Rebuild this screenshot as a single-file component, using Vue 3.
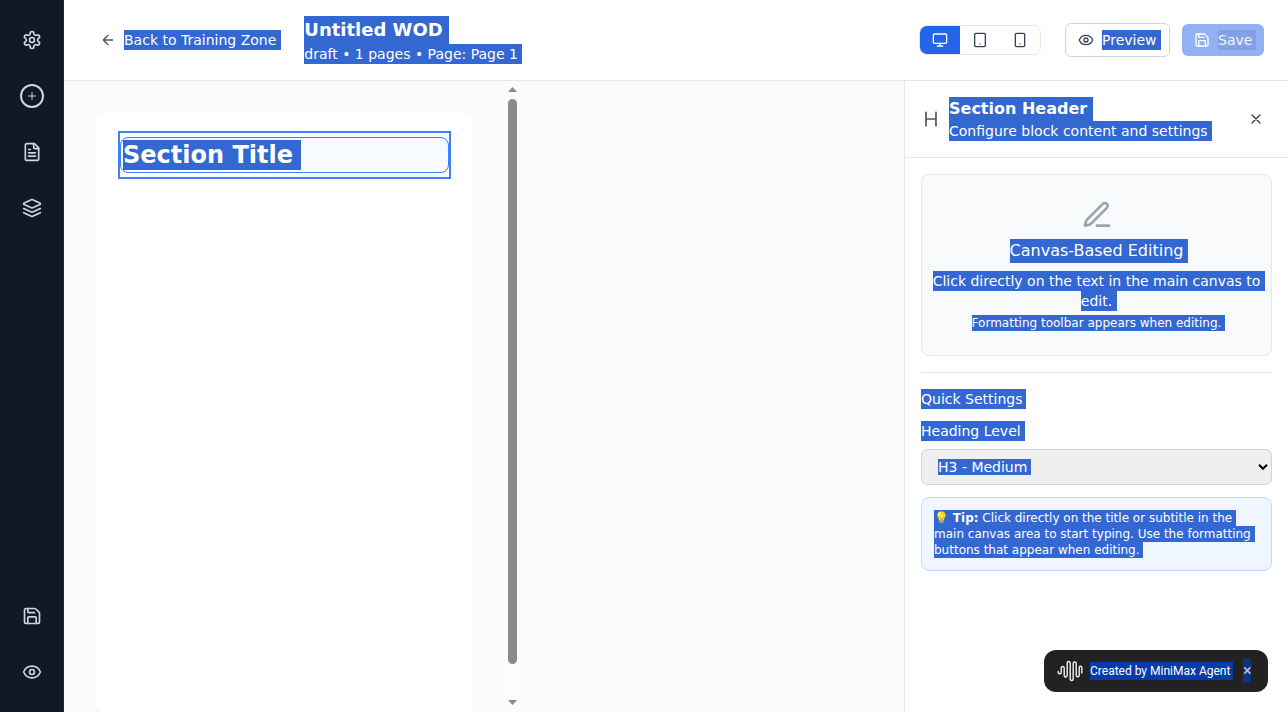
<script setup>
import { h } from 'vue'

const paths = {
  settings: '<path d="M12.22 2h-.44a2 2 0 0 0-2 2v.18a2 2 0 0 1-1 1.73l-.43.25a2 2 0 0 1-2 0l-.15-.08a2 2 0 0 0-2.73.73l-.22.38a2 2 0 0 0 .73 2.73l.15.1a2 2 0 0 1 1 1.72v.51a2 2 0 0 1-1 1.74l-.15.09a2 2 0 0 0-.73 2.73l.22.38a2 2 0 0 0 2.73.73l.15-.08a2 2 0 0 1 2 0l.43.25a2 2 0 0 1 1 1.73V20a2 2 0 0 0 2 2h.44a2 2 0 0 0 2-2v-.18a2 2 0 0 1 1-1.73l.43-.25a2 2 0 0 1 2 0l.15.08a2 2 0 0 0 2.73-.73l.22-.39a2 2 0 0 0-.73-2.73l-.15-.08a2 2 0 0 1-1-1.74v-.5a2 2 0 0 1 1-1.74l.15-.09a2 2 0 0 0 .73-2.73l-.22-.38a2 2 0 0 0-2.73-.73l-.15.08a2 2 0 0 1-2 0l-.43-.25a2 2 0 0 1-1-1.73V4a2 2 0 0 0-2-2z"/><circle cx="12" cy="12" r="3"/>',
  plus: '<path d="M5 12h14M12 5v14"/>',
  file: '<path d="M15 2H6a2 2 0 0 0-2 2v16a2 2 0 0 0 2 2h12a2 2 0 0 0 2-2V7Z"/><path d="M14 2v4a2 2 0 0 0 2 2h4M10 9H8M16 13H8M16 17H8"/>',
  layers: '<path d="m12.83 2.18a2 2 0 0 0-1.66 0L2.6 6.08a1 1 0 0 0 0 1.83l8.58 3.91a2 2 0 0 0 1.66 0l8.58-3.9a1 1 0 0 0 0-1.83Z"/><path d="m22 17.65-9.17 4.16a2 2 0 0 1-1.66 0L2 17.65"/><path d="m22 12.65-9.17 4.16a2 2 0 0 1-1.66 0L2 12.65"/>',
  save: '<path d="M15.2 3a2 2 0 0 1 1.4.6l3.8 3.8a2 2 0 0 1 .6 1.4V19a2 2 0 0 1-2 2H5a2 2 0 0 1-2-2V5a2 2 0 0 1 2-2z"/><path d="M17 21v-7a1 1 0 0 0-1-1H8a1 1 0 0 0-1 1v7M7 3v4a1 1 0 0 0 1 1h7"/>',
  eye: '<path d="M2.062 12.348a1 1 0 0 1 0-.696 10.75 10.75 0 0 1 19.876 0 1 1 0 0 1 0 .696 10.75 10.75 0 0 1-19.876 0"/><circle cx="12" cy="12" r="3"/>',
  back: '<path d="m12 19-7-7 7-7M19 12H5"/>',
  monitor: '<rect width="20" height="14" x="2" y="3" rx="2"/><path d="M8 21h8M12 17v4"/>',
  tablet: '<rect width="16" height="20" x="4" y="2" rx="2"/><path d="M12 18h.01"/>',
  phone: '<rect width="14" height="20" x="5" y="2" rx="2"/><path d="M12 18h.01"/>',
  heading: '<path d="M6 12h12M6 20V4M18 20V4"/>',
  close: '<path d="M18 6 6 18M6 6l12 12"/>',
  pen: '<path d="M12 20h9"/><path d="M16.376 3.622a1 1 0 0 1 3.002 3.002L7.368 18.635a2 2 0 0 1-.855.506l-2.872.838a.5.5 0 0 1-.62-.62l.838-2.872a2 2 0 0 1 .506-.854z"/>',
}

const Icon = (props) =>
  h('svg', {
    width: props.size,
    height: props.size,
    viewBox: '0 0 24 24',
    fill: 'none',
    stroke: 'currentColor',
    'stroke-width': 2,
    'stroke-linecap': 'round',
    'stroke-linejoin': 'round',
    innerHTML: paths[props.name],
  })
Icon.props = ['name', 'size']
</script>

<template>
  <div class="app">
    <nav class="rail">
      <button class="rail-btn"><Icon name="settings" size="20" /></button>
      <button class="rail-btn"><span class="ring"><Icon name="plus" size="12" /></span></button>
      <button class="rail-btn"><Icon name="file" size="20" /></button>
      <button class="rail-btn"><Icon name="layers" size="20" /></button>
      <span class="spacer"></span>
      <button class="rail-btn"><Icon name="save" size="20" /></button>
      <button class="rail-btn"><Icon name="eye" size="20" /></button>
    </nav>

    <div class="main">
      <header class="topbar">
        <a class="back"><Icon name="back" size="16" /><span class="sel">Back to Training Zone</span></a>
        <div class="doc">
          <h1><span class="sel w18">Untitled WOD</span></h1>
          <p><span class="sel">draft • 1 pages • Page: Page 1</span></p>
        </div>
        <span class="spacer"></span>
        <div class="devices">
          <button class="active"><Icon name="monitor" size="16" /></button>
          <button><Icon name="tablet" size="16" /></button>
          <button><Icon name="phone" size="16" /></button>
        </div>
        <button class="preview"><Icon name="eye" size="16" /><span class="sel">Preview</span></button>
        <button class="save"><Icon name="save" size="16" /><span class="sel muted">Save</span></button>
      </header>

      <div class="body">
        <section class="canvas">
          <div class="page">
            <div class="block">
              <div class="field"><h3><span class="sel w24">Section Title</span></h3></div>
            </div>
          </div>
          <div class="scrollbar">
            <svg class="arrow" width="9" height="5" viewBox="0 0 9 5"><path d="M0 5 4.5 0 9 5z" fill="#8b8b8b" /></svg>
            <div class="thumb"></div>
            <svg class="arrow" width="9" height="5" viewBox="0 0 9 5"><path d="M0 0h9L4.5 5z" fill="#8b8b8b" /></svg>
          </div>
        </section>

        <aside class="panel">
          <div class="panel-head">
            <Icon class="h-icon" name="heading" size="20" />
            <div class="panel-title">
              <h2><span class="sel w16">Section Header</span></h2>
              <p><span class="sel tight">Configure block content and settings</span></p>
            </div>
            <span class="spacer"></span>
            <button class="close"><Icon name="close" size="16" /></button>
          </div>
          <div class="panel-body">
            <div class="notice">
              <Icon name="pen" size="32" />
              <h4><span class="sel thin16">Canvas-Based Editing</span></h4>
              <p class="lead"><span class="sel">Click directly on the text in the main canvas to</span><br /><span class="sel">edit.</span></p>
              <p class="small"><span class="sel thin12">Formatting toolbar appears when editing.</span></p>
            </div>
            <div class="settings">
              <p class="row"><span class="sel tight">Quick Settings</span></p>
              <label class="row"><span class="sel tight">Heading Level</span></label>
              <div class="select">
                <span class="sel tight short">H3 - Medium</span>
                <svg width="10" height="8" viewBox="0 0 10 8"><path d="M1 1.8 5 5.8 9 1.8" fill="none" stroke="#000" stroke-width="2.1" /></svg>
              </div>
              <div class="tip">
                <span class="sel thin12">💡 <b>Tip:</b> Click directly on the title or subtitle in the</span>
                <span class="sel thin12">main canvas area to start typing. Use the formatting</span>
                <span class="sel thin12">buttons that appear when editing.</span>
              </div>
            </div>
          </div>
        </aside>
      </div>
    </div>

    <div class="badge">
      <svg width="26" height="22" viewBox="0 0 26 22" fill="none" stroke="#f2f2f2" stroke-width="1.4" stroke-linecap="round">
        <path d="M1.2 11.5v.8a1.5 1.5 0 0 0 3 0V8a1.5 1.5 0 0 1 3 0v7.5a1.5 1.5 0 0 0 3 0V3a1.5 1.5 0 0 1 3 0v12M13.2 15v4a1.5 1.5 0 0 0 3 0V3.5a1.5 1.5 0 0 1 3 0v11.7a1.5 1.5 0 0 0 3 0V7.5a1.3 1.3 0 0 1 2.6 0V13" />
      </svg>
      <span class="badge-text">Created by MiniMax Agent</span>
      <span class="badge-x">×</span>
    </div>
  </div>
</template>

<style>
body { margin: 0; overflow: hidden; }
</style>

<style scoped>
* { box-sizing: border-box; }
h1, h2, h3, h4, p { margin: 0; font-weight: 400; }
button { border: 0; padding: 0; background: none; font: inherit; color: inherit; display: flex; align-items: center; justify-content: center; }
svg { display: block; flex: none; }
.spacer { flex: 1; }
.app { position: relative; display: flex; width: 1288px; height: 712px; overflow: hidden; background: #f9fafb; font: 14px/20px "DejaVu Sans", sans-serif; color: #374151; }
.sel { display: inline-block; background: #3367d1; color: #fff; white-space: nowrap; padding-right: 4.45px; margin-right: -4.45px; }
.sel.tight { padding-right: 4px; margin-right: -4px; }
.sel.w18 { padding-right: 6px; }
.sel.w16 { padding-right: 5.4px; }
.sel.w24 { padding-right: 8px; }
.sel.thin16 { padding-right: 5px; margin-right: -5px; }
.sel.thin12 { padding-right: 3.8px; margin-right: -3.8px; }
.preview .sel, .save .sel { padding-right: 4px; margin-right: -4px; }
.sel.muted { background: #83a1e5; color: #f3f6fd; }

.rail { width: 64px; flex: none; background: #111827; border-right: 1px solid #1f2937; display: flex; flex-direction: column; align-items: center; gap: 16px; padding: 20px 0; color: #d1d5db; }
.rail-btn { width: 40px; height: 40px; }
.ring { width: 24px; height: 24px; border: 2px solid #d1d5db; border-radius: 50%; display: flex; align-items: center; justify-content: center; }

.main { flex: 1; min-width: 0; display: flex; flex-direction: column; }
.topbar { height: 81px; flex: none; background: #fff; border-bottom: 1px solid #e5e7eb; display: flex; align-items: center; padding: 0 24px 0 36px; }
.back { display: flex; align-items: center; gap: 8px; color: #4b5563; }
.doc { margin-left: 28px; }
.doc h1 { font-size: 18px; line-height: 28px; height: 28px; font-weight: 700; }
.doc p { height: 20px; }
.devices { display: flex; height: 30px; border: 1px solid #e5e7eb; border-radius: 8px; overflow: hidden; }
.devices button { width: 40px; }
.devices .active { background: #2563eb; color: #fff; }
.preview { height: 34px; width: 105px; margin-left: 24px; padding-left: 12px; justify-content: flex-start; gap: 8px; border: 1px solid #d1d5db; border-radius: 6px; }
.save { height: 32px; width: 82px; margin-left: 12px; padding-left: 12px; justify-content: flex-start; gap: 8px; border-radius: 6px; background: #92b1f5; color: #fff; }

.body { flex: 1; min-height: 0; display: flex; justify-content: space-between; }
.canvas { width: 456px; display: flex; justify-content: space-between; padding-left: 32px; }
.page { width: 377px; height: 600px; margin-top: 32px; background: #fff; border-radius: 8px; padding: 18px 22px; box-shadow: 0 1px 2px rgba(0, 0, 0, .03); }
.block { height: 48px; border: 2px solid #3b82f6; padding: 4px 0; }
.field { height: 36px; border: 1px solid #3b82f6; border-radius: 8px; background: #f7faff; padding: 2px; }
.field h3 { font-size: 24px; line-height: 30px; font-weight: 700; }
.scrollbar { width: 15px; background: #fcfcfc; display: flex; flex-direction: column; align-items: center; padding: 6px 0 7px; }
.thumb { width: 9px; height: 565px; margin: 7px 0 auto; border-radius: 5px; background: #8b8b8b; }

.panel { width: 384px; background: #fff; border-left: 1px solid #e5e7eb; }
.panel-head { height: 77px; border-bottom: 1px solid #e5e7eb; display: flex; align-items: center; padding: 0 24px 0 16px; }
.h-icon { color: #4b5563; }
.panel-title { margin-left: 8px; }
.panel-title h2 { font-size: 16px; line-height: 24px; height: 24px; font-weight: 700; }
.panel-title p { height: 20px; }
.panel-body { padding: 16px; }
.notice { height: 182px; border: 1px solid #e5e7eb; border-radius: 8px; background: #f9fafb; text-align: center; padding: 24px 0 0; color: #9ca3af; }
.notice svg { margin: 0 auto 8px; }
.notice h4 { font-size: 16px; line-height: 24px; height: 24px; }
.lead { margin-top: 8px; height: 40px; }
.small { margin-top: 4px; font-size: 12px; line-height: 16px; height: 16px; }
.settings { margin-top: 16px; padding-top: 16px; border-top: 1px solid #e5e7eb; }
.row { display: block; height: 20px; margin-bottom: 12px; }
label.row { margin-bottom: 8px; }
.select { height: 36px; border: 1px solid #d1d5db; border-radius: 6px; background: #efefef; display: flex; align-items: center; justify-content: space-between; padding: 0 3px 0 16px; }
.short { line-height: 16px; }
.tip { margin-top: 12px; height: 74px; border: 1px solid #bfdbfe; border-radius: 8px; background: #eff6ff; padding: 12px; font-size: 12px; line-height: 16px; display: flex; flex-direction: column; align-items: flex-start; }
.tip .sel { height: 16px; }

.badge { position: absolute; right: 20px; bottom: 20px; width: 224px; height: 42px; border-radius: 12px; background: #222; display: flex; align-items: center; padding-left: 13px; font-family: Roboto, sans-serif; font-size: 12px; color: #fff; }
.badge-text { margin-left: 7px; width: 143px; height: 18px; line-height: 18px; background: #083ba8; white-space: nowrap; }
.badge-x { margin-left: 10px; width: 8px; height: 24px; line-height: 24px; background: #11327f; color: #c4cbdc; font-size: 16px; text-align: center; }
</style>
